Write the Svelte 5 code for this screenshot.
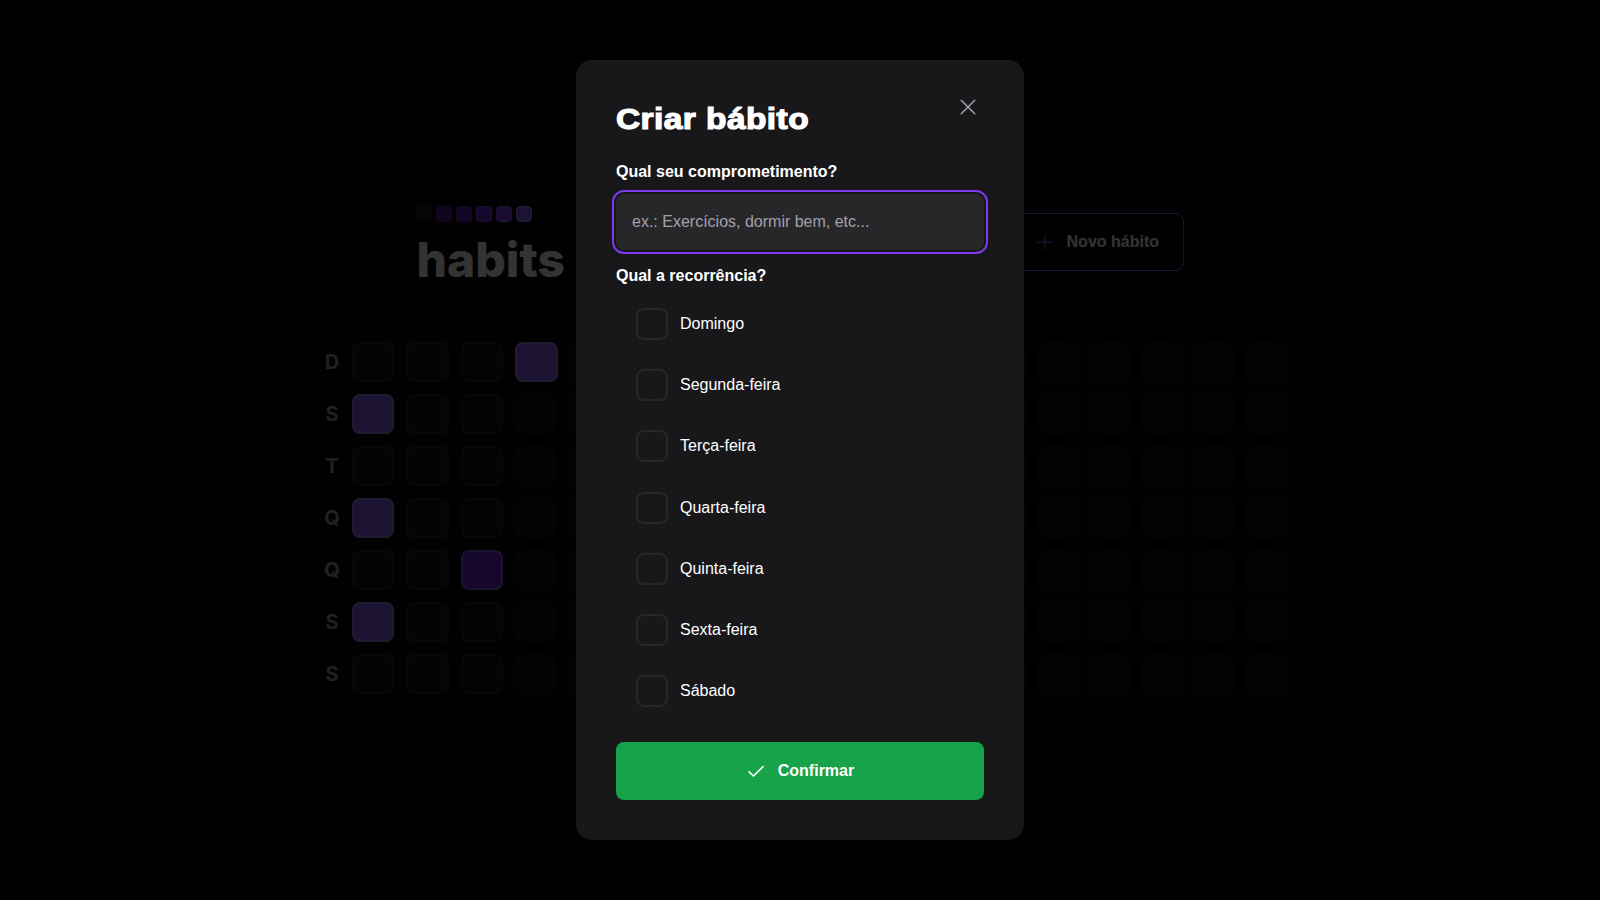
<script>
  const levels = [0, 1, 2, 3, 4, 5];
  const weekDays = ['D', 'S', 'T', 'Q', 'Q', 'S', 'S'];
  const options = ['Domingo', 'Segunda-feira', 'Terça-feira', 'Quarta-feira', 'Quinta-feira', 'Sexta-feira', 'Sábado'];
  const filled = { '0-1': 5, '0-3': 5, '0-5': 5, '2-4': 3, '3-0': 5 };
  const columns = Array.from({ length: 18 }, (_, c) =>
    weekDays.map((_, r) => ({
      level: filled[`${c}-${r}`] ?? 0,
      future: c > 3 || (c === 3 && r > 0)
    }))
  );
</script>

<div class="page">
  <div class="summary">
    <header>
      <div class="logo">
        <div class="squares">
          {#each levels as level}<i class="square l{level}"></i>{/each}
        </div>
        <span class="brand">habits</span>
      </div>
      <button class="new">
        <svg width="20" height="20" viewBox="0 0 256 256"><path d="M36 128H220M128 36V220" /></svg>
        Novo hábito
      </button>
    </header>
    <div class="board">
      <div class="days">
        {#each weekDays as day}<span>{day}</span>{/each}
      </div>
      {#each columns as column, c}
        <div class="column" class:wide={c < 4}>
          {#each column as cell}
            <div class="cell l{cell.level}" class:future={cell.future}></div>
          {/each}
        </div>
      {/each}
    </div>
  </div>
</div>

<div class="overlay">
  <div class="modal" role="dialog">
    <div class="top">
      <h1>Criar bábito</h1>
      <svg class="close" width="24" height="24" viewBox="0 0 256 256"><path d="M200 56L56 200M200 200L56 56" /></svg>
    </div>
    <label for="title">Qual seu comprometimento?</label>
    <input id="title" placeholder="ex.: Exercícios, dormir bem, etc..." />
    <span class="label">Qual a recorrência?</span>
    <div class="options">
      {#each options as option}
        <div class="option"><span class="box"></span><span>{option}</span></div>
      {/each}
    </div>
    <button class="confirm">
      <svg width="20" height="20" viewBox="0 0 256 256"><path d="M40 138L96 192L218 72" /></svg>
      Confirmar
    </button>
  </div>
</div>

<style>
  :global(body) {
    margin: 0;
    background: #09090a;
    color: #fff;
    font: 16px/24px "Liberation Sans", Arial, sans-serif;
  }
  * { box-sizing: border-box; }
  .page {
    height: 900px;
    display: flex;
    flex-direction: column;
    align-items: center;
    overflow: hidden;
  }
  .summary {
    width: 970px;
    padding-top: 206px;
  }
  header {
    width: 768px;
    height: 72px;
    margin: 0 0 64px 101px;
    display: flex;
    align-items: center;
    justify-content: space-between;
  }
  .logo { display: flex; flex-direction: column; height: 72px; }
  .squares { display: flex; gap: 4px; }
  .square { width: 16px; height: 16px; border-radius: 4px; border: 1px solid; }
  .brand {
    font: 800 48px/56px Inter, sans-serif;
    margin: 10px 0 0 0.5px;
    letter-spacing: 0;
  }
  button {
    font: inherit;
    font-weight: 600;
    color: #fff;
    display: flex;
    align-items: center;
    justify-content: center;
    gap: 12px;
    border-radius: 8px;
  }
  svg { fill: none; stroke: currentColor; stroke-width: 16; stroke-linecap: round; stroke-linejoin: round; flex: none; }
  .new { height: 58px; padding: 0 24px; background: none; border: 1px solid #8b5cf6; }
  .new svg { color: #8b5cf6; }
  .board { display: flex; gap: 12px; }
  .days, .column { display: flex; flex-direction: column; gap: 12px; width: 40px; flex: none; }
  .days { width: 25px; padding-left: 9px; }
  .days span {
    width: 16px;
    height: 40px;
    line-height: 40px;
    font-size: 20px;
    font-weight: 700;
    font-family: Inter, sans-serif;
    color: #a1a1aa;
    text-align: center;
  }
  .column.wide { width: 42.4px; }
  .cell { height: 40px; border-radius: 8px; border: 2px solid; }
  .future { width: 40px; opacity: 0.4; }
  .l0 { background: #18181b; border-color: #27272a; }
  .l1 { background: #4c1d95; border-color: #5b21b6; }
  .l2 { background: #5b21b6; border-color: #6d28d9; }
  .l3 { background: #6d28d9; border-color: #8b5cf6; }
  .l4 { background: #7c3aed; border-color: #8b5cf6; }
  .l5 { background: #8b5cf6; border-color: #a78bfa; }
  .overlay {
    position: fixed;
    inset: 0;
    background: rgba(0, 0, 0, 0.8);
    display: flex;
    align-items: center;
    justify-content: center;
  }
  .modal {
    width: 448px;
    height: 780px;
    padding: 40px;
    background: #18181b;
    border-radius: 16px;
    display: flex;
    flex-direction: column;
  }
  .top { display: flex; justify-content: space-between; height: 62px; flex: none; }
  h1 {
    margin: 0;
    font-size: 30px;
    line-height: 38px;
    font-weight: 900;
    letter-spacing: 0.4px;
    -webkit-text-stroke: 1.2px #fff;
    transform: translateY(0.4px) scaleX(1.115);
    transform-origin: left;
  }
  .close { color: #a1a1aa; margin: -5px 4px 0 0; }
  label, .label { font-weight: 600; line-height: 20px; }
  input {
    height: 56px;
    flex: none;
    margin: 12px 0 16px;
    padding: 0 16px;
    font: inherit;
    color: #fff;
    background: #27272a;
    border: 0;
    border-radius: 8px;
    outline: 2px solid #7c3aed;
    outline-offset: 2px;
  }
  input::placeholder { color: #a1a1aa; opacity: 1; }
  .options {
    height: 399px;
    flex: none;
    margin: 22.1px 20px 0;
    display: flex;
    flex-direction: column;
    justify-content: space-between;
  }
  .option { display: flex; align-items: center; gap: 12px; height: 32px; }
  .box { width: 32px; height: 32px; border: 2px solid #27272a; border-radius: 8px; }
  .confirm { height: 58px; margin-top: auto; flex: none; background: #16a34a; border: 0; }
  .confirm svg { stroke-width: 22; }
</style>
